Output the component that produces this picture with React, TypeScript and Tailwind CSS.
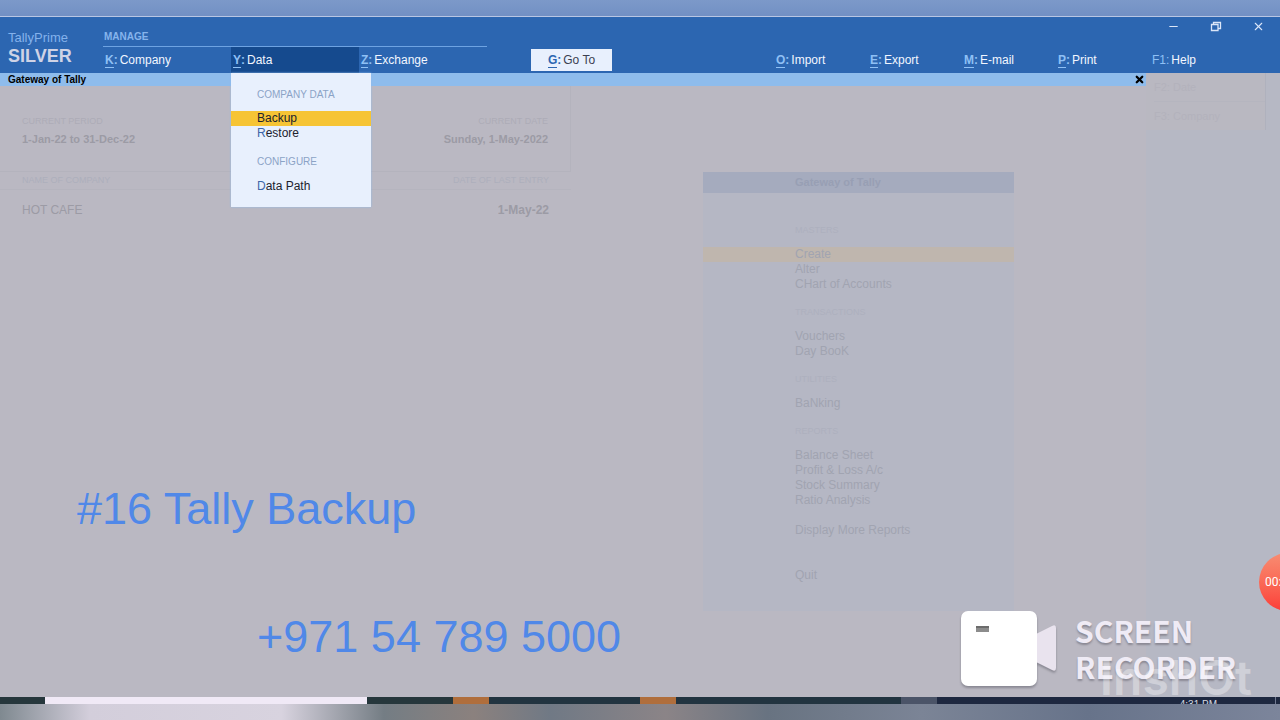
import { Minus, X } from "lucide-react";

type MenuEntry = { hotkey: string; label: string };
type GatewaySection = { title?: string; items: string[]; className: string };

const actions: MenuEntry[] = [
  { hotkey: "O", label: "Import" },
  { hotkey: "E", label: "Export" },
  { hotkey: "M", label: "E-mail" },
  { hotkey: "P", label: "Print" },
  { hotkey: "F1", label: "Help" },
];

const gatewaySections: GatewaySection[] = [
  { title: "MASTERS", items: ["Create", "Alter", "CHart of Accounts"], className: "pt-[31px]" },
  { title: "TRANSACTIONS", items: ["Vouchers", "Day BooK"], className: "pt-[14px]" },
  { title: "UTILITIES", items: ["BaNking"], className: "pt-[14px]" },
  {
    title: "REPORTS",
    items: ["Balance Sheet", "Profit & Loss A/c", "Stock Summary", "Ratio Analysis"],
    className: "pt-[14px]",
  },
  { items: ["Display More Reports"], className: "pt-[15px]" },
  { items: ["Quit"], className: "pt-[30px]" },
];

function Hotkey({ hotkey, label }: MenuEntry) {
  const underlined = hotkey.length === 1;
  return (
    <>
      <span className={`flex text-[#8fc0f5] ${underlined ? "font-bold" : ""}`}>
        <span className={underlined ? "border-b border-[#8fc0f5]" : ""}>{hotkey}</span>:
      </span>
      <span>{label}</span>
    </>
  );
}

function DataMenu() {
  return (
    <div className="absolute top-full left-0 z-10 w-[140px] bg-[#e8f0fd] pt-4 pb-[13px] text-xs leading-[15px] text-[#20222e] shadow-[0_0_2px_#8ebcec]">
      <h3 className="pl-[26px] text-[10px] leading-3 text-[#8ba3c6]">COMPANY DATA</h3>
      <button className="mt-[10px] block w-full bg-[#f6c435] pl-[26px] text-left">
        Backup
      </button>
      <button className="block w-full pl-[26px] text-left">
        <span className="text-[#3c66a8]">R</span>estore
      </button>
      <h3 className="mt-[15px] pl-[26px] text-[10px] leading-3 text-[#8ba3c6]">CONFIGURE</h3>
      <button className="mt-[11px] block w-full pl-[26px] text-left">
        <span className="text-[#3c66a8]">D</span>ata Path
      </button>
    </div>
  );
}

function Header() {
  return (
    <header className="flex h-14 bg-[#2c66b1] text-xs text-[#f2f6ff]">
      <div className="w-[103px] shrink-0 pt-[13px] pl-2">
        <p className="text-[13px] leading-4 text-[#84b2ec]">TallyPrime</p>
        <p className="text-lg leading-5 font-bold text-[#cfd3e6]">SILVER</p>
      </div>

      <div className="flex min-w-0 flex-1 flex-col">
        <div className="flex h-[30px] justify-between">
          <h2 className="w-96 border-b border-[#6ea3e2] pt-[14px] pl-px text-[10px] leading-3 font-bold text-[#86b4ec]">
            MANAGE
          </h2>
          <div className="flex items-start gap-[30px] pt-[3px] pr-[15px] text-[#dbe6f8]">
            <button aria-label="Minimize">
              <Minus size={13} strokeWidth={2} />
            </button>
            <button aria-label="Restore">
              <svg width="12" height="12" viewBox="0 0 12 12" fill="none" stroke="currentColor" strokeWidth="1.3">
                <path d="M1.500 4.500h6.500v6h-6.500z M3.500 4.500V2.500h7v6H8" />
              </svg>
            </button>
            <button aria-label="Close">
              <X size={13} strokeWidth={2} />
            </button>
          </div>
        </div>

        <nav className="flex h-[26px] leading-[14px]">
          <button className="flex w-32 items-center gap-[2px] pl-[2px]">
            <Hotkey hotkey="K" label="Company" />
          </button>
          <div className="relative w-32 bg-[#154a8e]">
            <button className="flex h-full w-full items-center gap-[2px] pl-[2px]">
              <Hotkey hotkey="Y" label="Data" />
            </button>
            <DataMenu />
          </div>
          <button className="flex w-32 items-center gap-[2px] pl-[2px]">
            <Hotkey hotkey="Z" label="Exchange" />
          </button>

          <button className="ml-11 flex h-[22px] w-[81px] items-center justify-center gap-[2px] self-center bg-[#e8f0fd] text-[#3b3f50]">
            <span className="flex font-bold text-[#2c66b1]">
              <span className="border-b border-[#2c66b1]">G</span>:
            </span>
            Go To
          </button>

          <div className="mr-[34px] ml-auto flex">
            {actions.map((action) => (
              <button key={action.label} className="flex w-[94px] items-center gap-[2px]">
                <Hotkey {...action} />
              </button>
            ))}
          </div>
        </nav>
      </div>
    </header>
  );
}

function CompanyInfo() {
  return (
    <section className="flex w-[571px] shrink-0 flex-col text-[#9c9ba5]">
      <div className="flex h-[86px] justify-between border-r border-b border-[#b4b3bd] px-[22px] pt-[29px] text-[11px] leading-4 font-bold">
        <div>
          <h3 className="text-[9px] leading-3 font-normal text-[#adacb7]">CURRENT PERIOD</h3>
          <p className="pt-1">1-Jan-22 to 31-Dec-22</p>
        </div>
        <div className="text-right">
          <h3 className="text-[9px] leading-3 font-normal text-[#adacb7]">CURRENT DATE</h3>
          <p className="pt-1">Sunday, 1-May-2022</p>
        </div>
      </div>
      <div className="flex h-[18px] items-center justify-between border-b border-[#b5b4be] px-[22px] text-[9px] text-[#adafbc]">
        <h3>NAME OF COMPANY</h3>
        <h3>DATE OF LAST ENTRY</h3>
      </div>
      <div className="flex justify-between px-[22px] pt-3 text-xs">
        <p>HOT CAFE</p>
        <p className="font-bold">1-May-22</p>
      </div>
    </section>
  );
}

function GatewayMenu() {
  return (
    <section className="mt-[86px] mr-[132px] ml-auto w-[311px] shrink-0 self-start bg-[#b5b7c4] pb-7 text-xs leading-[15px] text-[#a1a4b1]">
      <h2 className="bg-[#a5abbe] pl-[92px] text-[11px] leading-[21px] font-bold text-[#989fb4]">
        Gateway of Tally
      </h2>
      {gatewaySections.map((section) => (
        <div key={section.items[0]} className={section.className}>
          {section.title && (
            <h3 className="mb-[11px] pl-[92px] text-[9px] leading-3 text-[#adb0be]">
              {section.title}
            </h3>
          )}
          {section.items.map((item) => (
            <button
              key={item}
              className={`block w-full pl-[92px] text-left ${item === "Create" ? "bg-[#bfb6ae]" : ""}`}
            >
              {item}
            </button>
          ))}
        </div>
      ))}
    </section>
  );
}

function Taskbar() {
  return (
    <footer className="flex h-[7px] overflow-hidden bg-[#223440]">
      <div className="w-[45px] bg-[#26373c]" />
      <div className="w-[322px] bg-[#f0e9f6]" />
      <div className="w-[86px] bg-[#26373c]" />
      <div className="w-9 bg-[#b06e3c]" />
      <div className="w-[151px]" />
      <div className="w-9 bg-[#b06e3c]" />
      <div className="w-[225px]" />
      <div className="w-9 bg-[#4b5468]" />
      <div className="flex flex-1 justify-end bg-[#1e2840]">
        <time className="mr-[58px] pt-[2px] text-[10px] leading-3 text-[#d5d8e2]">4:31 PM</time>
        <div className="mr-1 w-px bg-[#717991]" />
      </div>
    </footer>
  );
}

function RecorderBadge() {
  return (
    <div className="absolute right-0 bottom-4 h-[94px] w-[320px]">
      <div className="flex items-start">
        <svg width="100" height="84" viewBox="0 0 100 84" className="drop-shadow-[0_2px_1px_rgba(90,90,100,0.5)]">
          <path d="M76 24 92 16q4-2 4 2v40q0 4-4 2L76 52z" fill="#e9e3ee" />
          <rect x="1" y="1" width="76" height="75" rx="7" fill="#fff" />
          <rect x="16" y="16" width="13" height="6" fill="#8c8c8c" />
          <path d="M16 16h13v2H16z" fill="#6c6c6c" />
        </svg>
        <p className="pt-[2px] pl-[15px] font-['Noto_Sans_CJK_SC',sans-serif] text-[30px] leading-9 font-bold text-[#efebf5] [text-shadow:0_2px_2px_#8b8994]">
          SCREEN
          <br />
          RECORDER
        </p>
      </div>
      <p className="absolute right-7 bottom-[-4px] font-[Inter,sans-serif] text-[48px] leading-[60px] font-semibold text-white/35">
        InshOt
      </p>
    </div>
  );
}

export default function App() {
  return (
    <div className="relative flex min-h-screen flex-col overflow-hidden bg-[#bab8c2] font-['Liberation_Sans',Arial,sans-serif]">
      <div className="h-[17px] border-b border-[#b9c6e4] bg-linear-to-b from-[#7c99c9] to-[#7290c4]" />
      <Header />

      <div className="flex flex-1">
        <main className="flex min-w-0 flex-1 flex-col">
          <div className="flex h-[13px] items-center justify-between bg-[#8ebcec] pr-px pl-2 text-black">
            <h1 className="text-[10px] leading-3 font-bold">Gateway of Tally</h1>
            <button aria-label="Close Gateway of Tally">
              <X size={11} strokeWidth={5} />
            </button>
          </div>
          <div className="flex flex-1">
            <CompanyInfo />
            <GatewayMenu />
          </div>
        </main>

        <aside className="w-[134px] bg-[#b6b8c4] text-[11px] leading-7 text-[#b3b2bc]">
          <div className="mr-[14px] border-r border-[#afb1bd] bg-[#b9b8c1] pl-2">
            <p className="border-b border-[#b5b5bf]">F2: Date</p>
            <p>F3: Company</p>
          </div>
        </aside>
      </div>

      <Taskbar />
      <div className="h-4 bg-[linear-gradient(90deg,#7f8990_0%,#d3cedb_7%,#d8d3df_22%,#747d84_30%,#8b817e_37%,#707985_43%,#8b8487_52%,#687381_60%,#7b8496_72%,#67738a_85%,#7c859b_100%)]" />

      <p className="absolute bottom-[184px] left-[77px] text-[45px] leading-[54px] text-[#5088e8]">
        #16 Tally Backup
      </p>
      <p className="absolute bottom-14 left-[257px] text-[45px] leading-[54px] text-[#5088e8]">
        +971 54 789 5000
      </p>

      <RecorderBadge />
      <div className="absolute right-[-37px] bottom-[109px] flex size-[58px] items-center rounded-full bg-linear-to-b from-[#f78c72] to-[#fb3b38] pl-[6px] font-[Roboto,sans-serif] text-xs text-white">
        00:
      </div>
    </div>
  );
}
